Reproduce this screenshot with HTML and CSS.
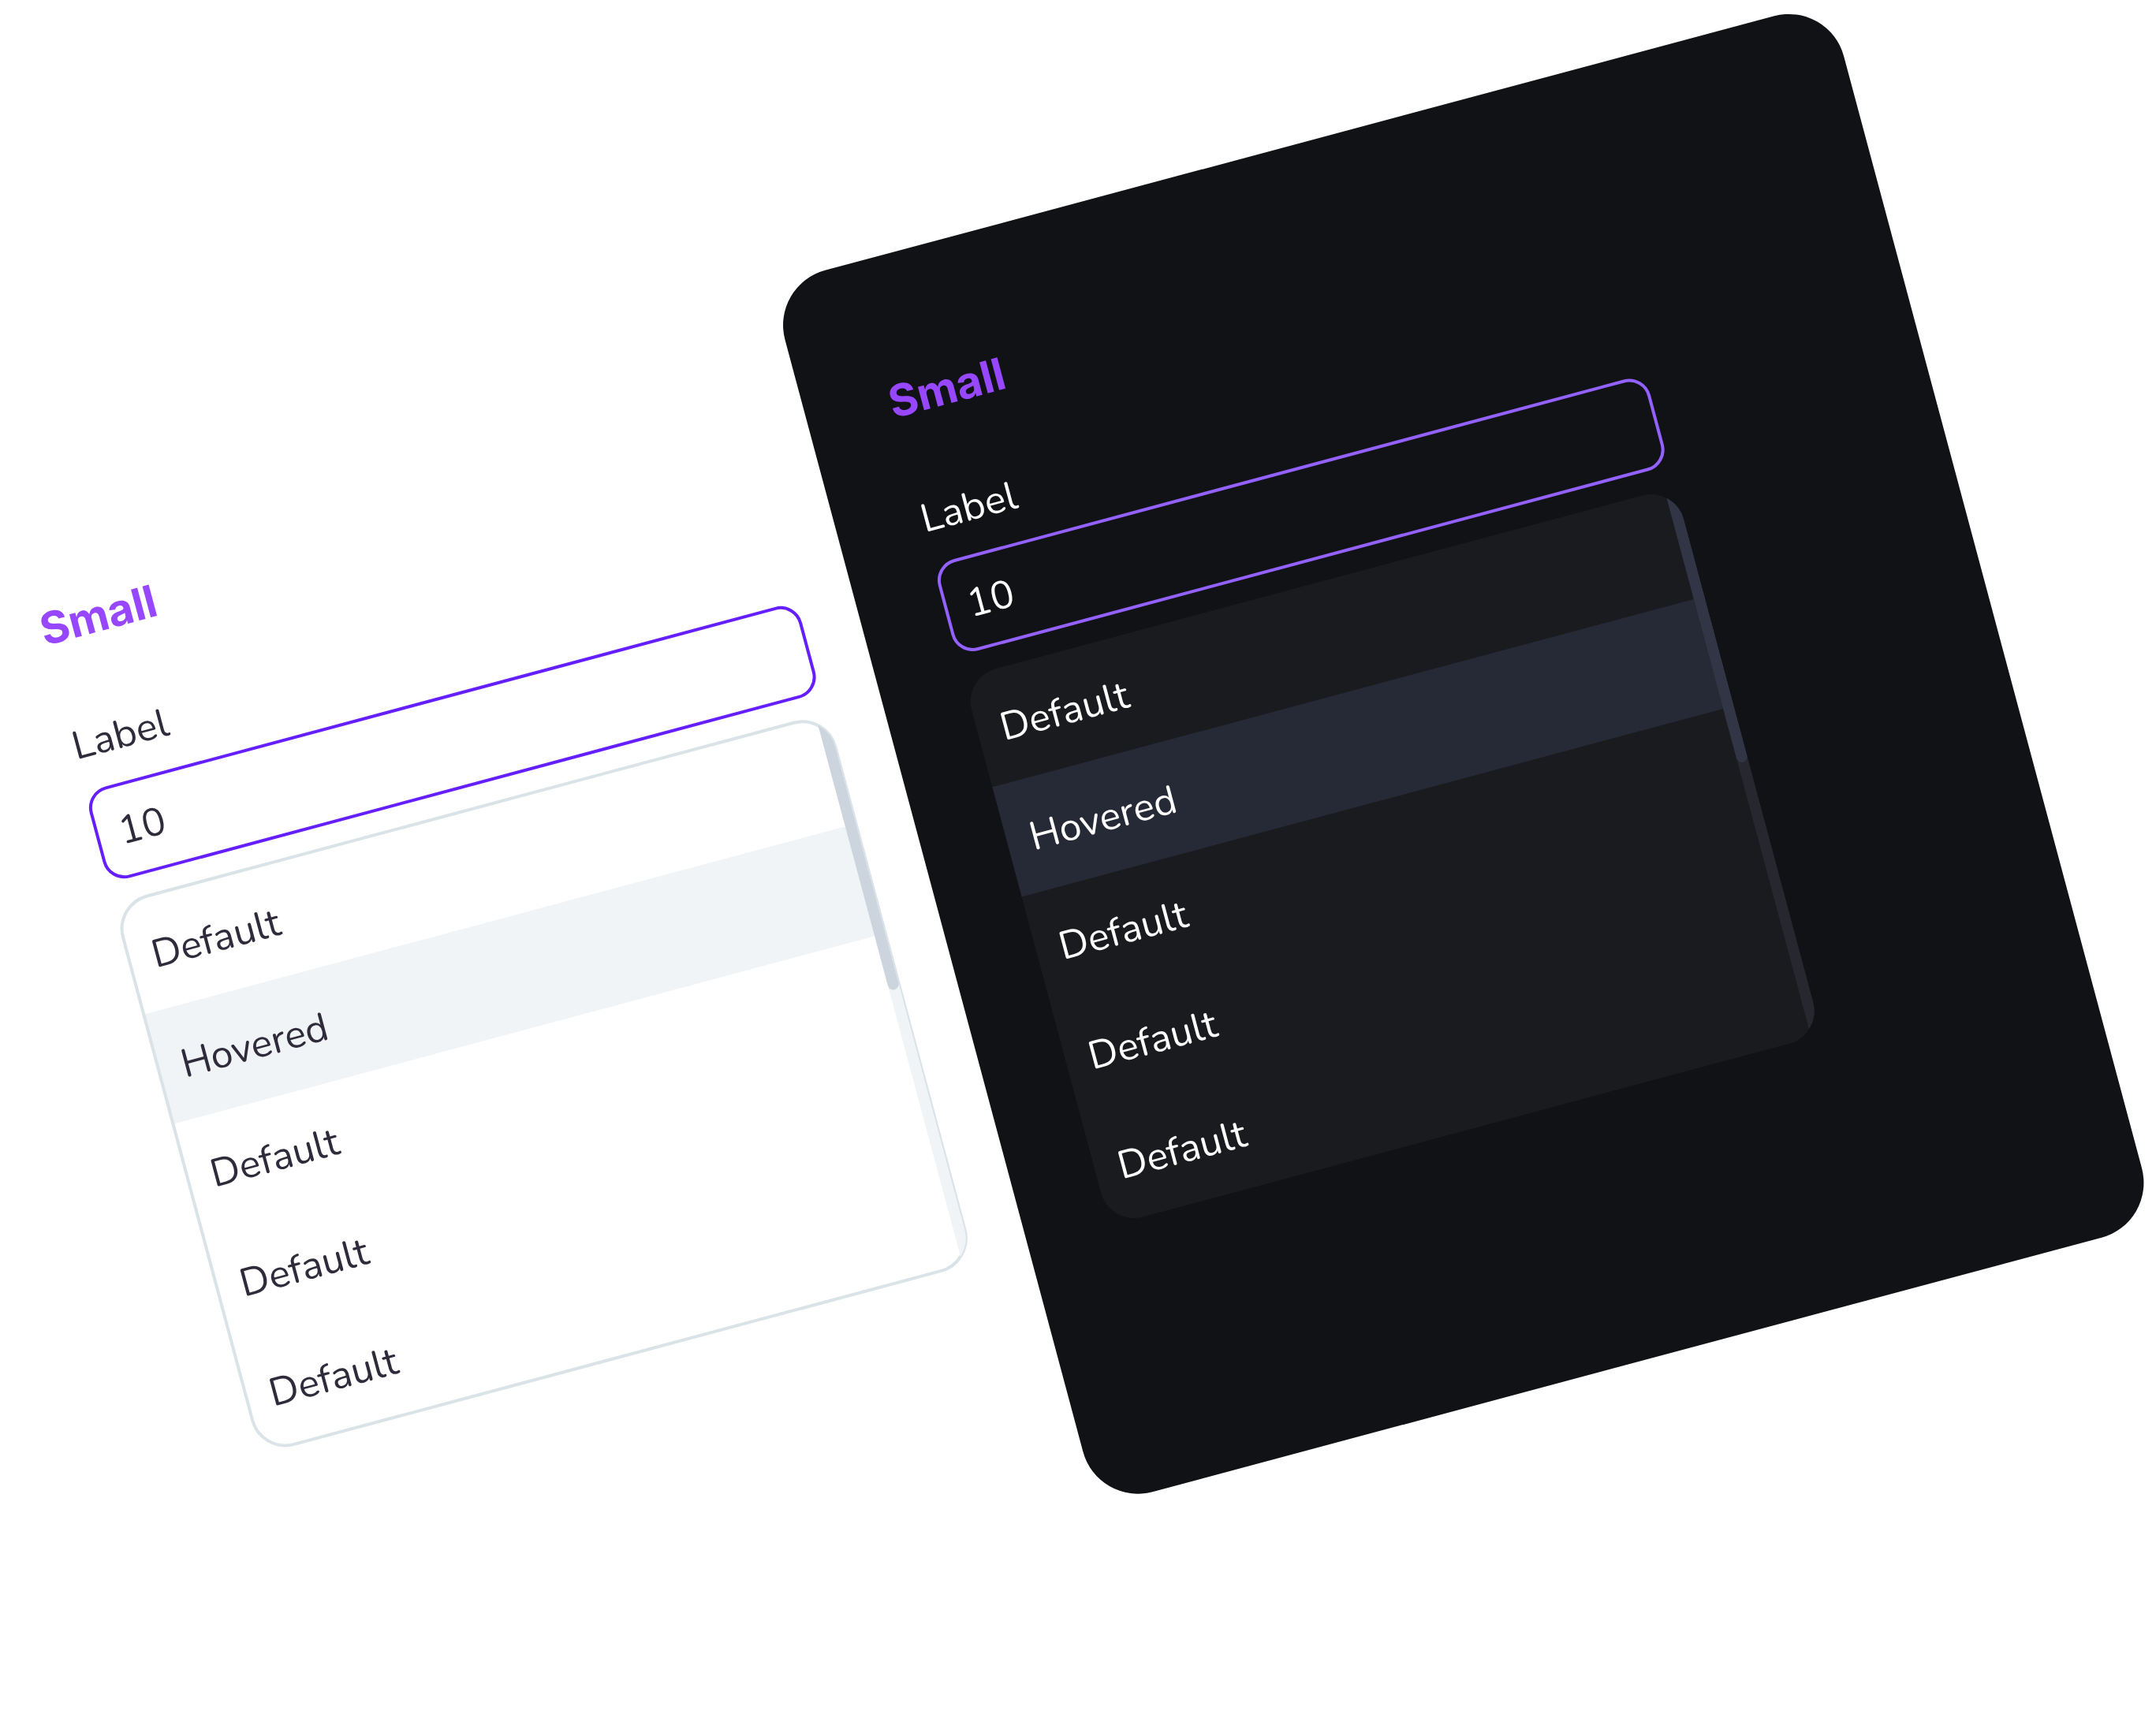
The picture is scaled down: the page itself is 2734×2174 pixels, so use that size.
FILE: index.html
```html
<!DOCTYPE html>
<html lang="en">
<head>
  <meta charset="utf-8">
  <meta name="viewport" content="width=device-width, initial-scale=1">
  <title>Small dropdown</title>
  <link rel="stylesheet" href="styles.css">
</head>
<body>
  <main class="stage">
    <div class="board">
      <section class="panel light">
        <h2 class="title">Small</h2>
        <div class="field">
          <label class="label" for="value-light">Label</label>
          <input class="input" id="value-light" type="text" value="10" role="combobox" aria-expanded="true" aria-controls="list-light">
        </div>
        <div class="menu">
          <ul class="options" id="list-light" role="listbox" aria-label="Label">
            <li class="option" role="option">Default</li>
            <li class="option hovered" role="option">Hovered</li>
            <li class="option" role="option">Default</li>
            <li class="option" role="option">Default</li>
            <li class="option" role="option">Default</li>
          </ul>
          <div class="track"><div class="thumb"></div></div>
        </div>
      </section>
      <section class="panel dark">
        <h2 class="title">Small</h2>
        <div class="field">
          <label class="label" for="value-dark">Label</label>
          <input class="input" id="value-dark" type="text" value="10" role="combobox" aria-expanded="true" aria-controls="list-dark">
        </div>
        <div class="menu">
          <ul class="options" id="list-dark" role="listbox" aria-label="Label">
            <li class="option" role="option">Default</li>
            <li class="option hovered" role="option">Hovered</li>
            <li class="option" role="option">Default</li>
            <li class="option" role="option">Default</li>
            <li class="option" role="option">Default</li>
          </ul>
          <div class="track"><div class="thumb"></div></div>
        </div>
      </section>
    </div>
  </main>
</body>
</html>
```
FILE: styles.css
```css
* {
  box-sizing: border-box;
}

body {
  margin: 0;
  background: #ffffff;
  font-family: Nunito, Lato, sans-serif;
}

.stage {
  display: flow-root;
  height: 100vh;
  overflow: hidden;
}

/* Both themes sit on one board, tilted as a whole around the page corner */
.board {
  display: grid;
  grid-template-columns: 1007fr 1390fr;
  margin: 602px 494px 0 -157px;
  transform: rotate(-15deg);
  transform-origin: 157px -602px;
}

.panel {
  display: flex;
  flex-direction: column;
  min-width: 0;
  padding-top: 152px;
  padding-bottom: 340px;
}

.light {
  --text: #2f2b3b;
  --accent: #651fff;
  --surface: #ffffff;
  --edge: #dae3e7;
  --hover: #f0f4f7;
  --track: #f0f4f7;
  --thumb: #ccd5dd;
  padding-right: 72px;
}

.dark {
  --text: #ffffff;
  --accent: #9361ff;
  --surface: #1a1b1e;
  --hover: #262a36;
  --track: #26272f;
  --thumb: #313546;
  padding-left: 107px;
  padding-right: 348px;
  border-radius: 72px;
  background: #111215;
}

.title {
  margin: 0 0 92px;
  color: #9747ff;
  font: 700 56px/64px Inter, "Liberation Sans", sans-serif;
}

.field {
  display: flex;
  flex-direction: column;
  gap: 28px;
  margin-bottom: 28px;
}

.label {
  padding-left: 1px;
  color: var(--text);
  font-size: 50px;
  line-height: 60px;
}

.input {
  width: 100%;
  height: 120px;
  padding: 0 26px;
  border: 4px solid var(--accent);
  border-radius: 28px;
  outline: 0;
  background: transparent;
  color: var(--text);
  font: inherit;
  font-size: 50px;
}

.menu {
  position: relative;
  overflow: hidden;
  border-radius: 43px;
  background: var(--surface);
}

.light .menu {
  outline: 4px solid var(--edge);
  outline-offset: -2px;
}

.options {
  margin: 0;
  padding: 0;
  list-style: none;
}

.option {
  height: 144px;
  padding: 3px 30px 0;
  color: var(--text);
  font-size: 50px;
  line-height: 144px;
}

.hovered {
  background: var(--hover);
}

.track {
  position: absolute;
  top: 0;
  right: 0;
  bottom: 0;
  width: 14px;
  background: var(--track);
}

.thumb {
  height: 50%;
  border-radius: 7px;
  background: var(--thumb);
}
```
